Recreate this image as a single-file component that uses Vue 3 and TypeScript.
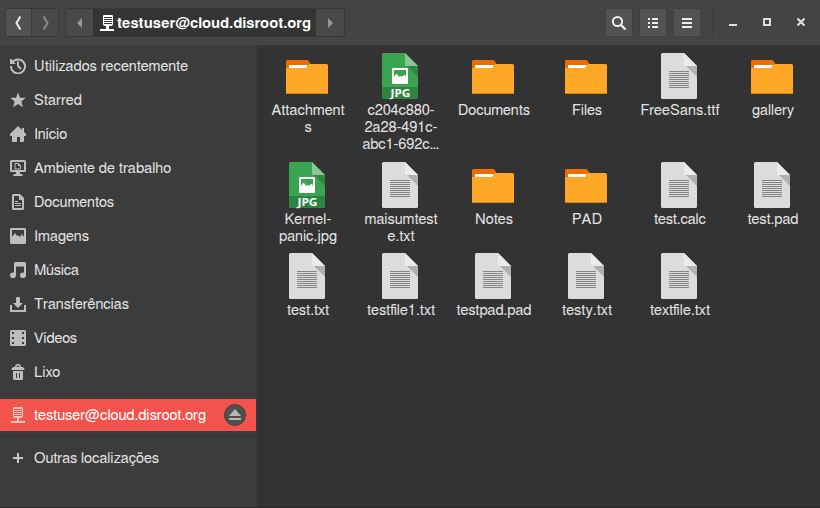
<script setup lang="ts">
type PlaceIcon =
  | 'recent' | 'star' | 'home' | 'desktop' | 'document' | 'image'
  | 'music' | 'download' | 'video' | 'trash'

interface Place { icon: PlaceIcon; label: string; width: number }
interface FileItem { kind: 'folder' | 'jpg' | 'text'; lines: { text: string; width: number }[] }

const places: Place[] = [
  { icon: 'recent', label: 'Utilizados recentemente', width: 154 },
  { icon: 'star', label: 'Starred', width: 48 },
  { icon: 'home', label: 'Início', width: 33 },
  { icon: 'desktop', label: 'Ambiente de trabalho', width: 137 },
  { icon: 'document', label: 'Documentos', width: 80 },
  { icon: 'image', label: 'Imagens', width: 55 },
  { icon: 'music', label: 'Música', width: 45 },
  { icon: 'download', label: 'Transferências', width: 95 },
  { icon: 'video', label: 'Vídeos', width: 43 },
  { icon: 'trash', label: 'Lixo', width: 26 },
]

const file = (kind: FileItem['kind'], ...lines: [string, number][]): FileItem => ({
  kind,
  lines: lines.map(([text, width]) => ({ text, width })),
})

const files: FileItem[] = [
  file('folder', ['Attachment', 73], ['s', 7]),
  file('jpg', ['c204c880-', 67], ['2a28-491c-', 73], ['abc1-692c…', 77]),
  file('folder', ['Documents', 72]),
  file('folder', ['Files', 30]),
  file('text', ['FreeSans.ttf', 79]),
  file('folder', ['gallery', 42]),
  file('jpg', ['Kernel-', 47], ['panic.jpg', 58]),
  file('text', ['maisumtest', 73], ['e.txt', 27]),
  file('folder', ['Notes', 38]),
  file('folder', ['PAD', 30]),
  file('text', ['test.calc', 52]),
  file('text', ['test.pad', 51]),
  file('text', ['test.txt', 42]),
  file('text', ['testfile1.txt', 68]),
  file('text', ['testpad.pad', 75]),
  file('text', ['testy.txt', 50]),
  file('text', ['textfile.txt', 60]),
]
</script>

<template>
  <div class="window">
    <header class="bar">
      <div class="group nav">
        <button class="seg lit" aria-label="Back"><svg width="16" height="16"><path d="M9.300 1.500 5.500 8l3.800 6.500" fill="none" stroke="#eee" stroke-width="2" /></svg></button>
        <button class="seg" aria-label="Forward"><svg width="16" height="16"><path d="M6.700 1.500 10.500 8l-3.800 6.500" fill="none" stroke="#888" stroke-width="2" /></svg></button>
      </div>
      <div class="group path">
        <button class="seg" aria-label="Previous folder"><svg width="16" height="16"><path d="M10 3v10L5 8z" fill="#999" /></svg></button>
        <div class="crumb">
          <svg class="server" width="16" height="16"><path fill="#fff" fill-rule="evenodd" d="M4 0h8q1 0 1 1v8q0 2-2 2H9v3h5v2H0v-2h6v-3H5q-2 0-2-2V1q0-1 1-1zm0 2v1h8V2zm0 2v1h8V4zm0 2v1h8V6zm0 2v1h8V8z" /></svg>
          <svg class="txt bold" width="195" height="20"><text x="0" y="15" textLength="194">testuser@cloud.disroot.org</text></svg>
        </div>
        <button class="seg" aria-label="Next folder"><svg width="16" height="16"><path d="M6 3v10l5-5z" fill="#999" /></svg></button>
      </div>
      <div class="tools">
        <button class="tool" aria-label="Search"><svg width="16" height="16"><circle cx="6.500" cy="6.500" r="4.600" fill="none" stroke="#eee" stroke-width="2" /><path d="m10 10 4.500 4.500" stroke="#eee" stroke-width="2.400" /></svg></button>
        <button class="tool" aria-label="List view"><svg width="16" height="16"><path fill="#eee" d="M3 3h2v2H3zm4 0h6v2H7zM3 7h2v2H3zm4 0h6v2H7zM3 11h2v2H3zm4 0h6v2H7z" /></svg></button>
        <button class="tool" aria-label="Menu"><svg width="16" height="16"><path fill="#eee" d="M3 3h10v2H3zm0 4h10v2H3zm0 4h10v2H3z" /></svg></button>
      </div>
      <div class="controls">
        <svg width="16" height="16"><path d="M4 10h8v2H4z" fill="#ddd" /></svg>
        <svg width="16" height="16"><path d="M5 5h6v6H5z" fill="none" stroke="#ddd" stroke-width="2" /></svg>
        <svg width="16" height="16"><path d="m4.500 4.500 7 7m0-7-7 7" stroke="#ddd" stroke-width="2.200" /></svg>
      </div>
    </header>

    <main class="body">
      <aside class="side">
        <div v-for="p in places" :key="p.label" class="place">
          <svg class="icon" width="16" height="16" fill="#bebebe">
            <g v-if="p.icon === 'recent'" fill="none" stroke="#bebebe"><path d="M2.200 4.500A7 7 0 1 1 1 8" stroke-width="2" /><path d="M8 3.500V8l3 3" stroke-width="2" /><path d="M0 1v5h6L4 4.300 1.500 1z" fill="#bebebe" stroke="none" /></g>
            <path v-else-if="p.icon === 'star'" d="m8 .5 2 5.200h5.800l-4.400 3.700 1.500 5.800L8 12l-4.900 3.200 1.500-5.800L.2 5.700H6z" />
            <path v-else-if="p.icon === 'home'" d="m8 0 4 4V2h2v4l2 2v2h-2v5q0 1-1 1h-3v-5H7v5H3q-1 0-1-1v-5H0V8z" />
            <g v-else-if="p.icon === 'desktop'"><path fill-rule="evenodd" d="M1.500 0h13Q16 0 16 1.500v9q0 1.500-1.500 1.500h-13Q0 12 0 10.500v-9Q0 0 1.500 0zM2 2v8h12V2zM6 12h4v2h2l1 2H3l1-2h2z" /><path d="M5 3.500h3.500l2 2v3.500H5z" fill="none" stroke="#bebebe" /><path d="M8 3v3h3z" /></g>
            <path v-else-if="p.icon === 'document'" fill-rule="evenodd" d="M3.500 0H10l4 4v10.500q0 1.500-1.500 1.500h-9Q2 16 2 14.500v-13Q2 0 3.500 0zM4 2v12h8V6H9V2zm1 5h3v1H5zm0 2h6v1H5zm0 2h6v1H5z" />
            <path v-else-if="p.icon === 'image'" fill-rule="evenodd" d="M1.500 0h13Q16 0 16 1.500v13q0 1.500-1.500 1.500h-13Q0 16 0 14.500v-13Q0 0 1.500 0zM2 2v7l3-4 2 3 1-1 2 2 2-3 2 3V2z" />
            <g v-else-if="p.icon === 'music'"><path d="M5.500 0h9Q16 0 16 1.500V13h-2V4.500H6V13H4V1.500Q4 0 5.500 0z" /><ellipse cx="3" cy="13.200" rx="3" ry="2.800" /><ellipse cx="13" cy="13.200" rx="3" ry="2.800" /></g>
            <path v-else-if="p.icon === 'download'" d="M7 1h2q1 0 1 1v5h3l-5 5-5-5h3V2q0-1 1-1zM0 9h2v5h12V9h2v7H0z" />
            <path v-else-if="p.icon === 'video'" fill-rule="evenodd" d="M1.500 0h13Q16 0 16 1.500v13q0 1.500-1.500 1.500h-13Q0 16 0 14.500v-13Q0 0 1.500 0zM2 2v2h2V2zm10 0v2h2V2zM2 7v2h2V7zm10 0v2h2V7zM2 12v2h2v-2zm10 0v2h2v-2z" />
            <g v-else><path d="M5 3q0-3 3-3t3 3h2l1.500 2v1h-13V5L3 3zm1.500 0h3Q9 1.500 8 1.500T6.500 3z" fill-rule="evenodd" /><path fill-rule="evenodd" d="M3 7h10v7.500q0 1.500-1.500 1.500h-7Q3 16 3 14.500zm3 2v5h1V9zm3 0v5h1V9z" /></g>
          </svg>
          <svg class="txt" :width="p.width + 2" height="20"><text x="0" y="15" :textLength="p.width">{{ p.label }}</text></svg>
        </div>
        <div class="rule"></div>
        <div class="place selected">
          <svg class="icon" width="16" height="16"><path fill="#fbc1be" fill-rule="evenodd" d="M4 0h8q1 0 1 1v8q0 2-2 2H9v3h6v2H1v-2h6v-3H5q-2 0-2-2V1q0-1 1-1zm0 2v1h8V2zm0 2v1h8V4zm0 2v1h8V6zm0 2v1h8V8z" /></svg>
          <svg class="txt" width="174" height="20"><text x="0" y="15" textLength="172">testuser@cloud.disroot.org</text></svg>
          <button class="eject" aria-label="Eject"><svg width="12" height="12"><path d="m6 0 6 7H0zM0 9h12v2H0z" fill="#b8b8b8" /></svg></button>
        </div>
        <div class="rule lower"></div>
        <div class="place other">
          <svg class="icon" width="16" height="16"><path fill="#c8c8c8" d="M7 3h2v4h4v2H9v4H7V9H3V7h4z" /></svg>
          <svg class="txt" width="128" height="20"><text x="0" y="15" textLength="125">Outras localizações</text></svg>
        </div>
      </aside>

      <section class="files">
        <div v-for="(f, i) in files" :key="i" class="file">
          <svg v-if="f.kind === 'folder'" width="48" height="48">
            <path d="M3 11V9.500Q3 8 4.500 8H24q1.500 0 2 1.500L28 13v5H3z" fill="#ef6c00" />
            <path d="M6 13h19l-2 4H6z" fill="#fff" />
            <path d="M3 16h20q1 0 1.500-1l1-2q.5-1 1.500-1h16.500q1.500 0 1.500 1.500V42H3z" fill="#ffa726" />
            <path d="M3 41h42v1H3z" fill="#cc861e" />
          </svg>
          <svg v-else width="48" height="48">
            <path d="M7.500 1H29l13 13v31.500q0 1.500-1.500 1.500h-33Q6 47 6 45.500v-43Q6 1 7.500 1z" :fill="f.kind === 'jpg' ? '#3ba451' : '#dcdcdc'" />
            <path d="M31 14h11v11z" :fill="f.kind === 'jpg' ? '#2f8542' : '#b0b0b0'" />
            <path d="M29 1l13 13H30.500Q29 14 29 12.500z" :fill="f.kind === 'jpg' ? '#88c694' : '#ebebeb'" />
            <g v-if="f.kind === 'jpg'">
              <path d="M6 35h36v10.500q0 1.500-1.500 1.500h-33Q6 47 6 45.500z" fill="#2f8340" />
              <path fill="#fff" fill-rule="evenodd" d="M17 16h14q1 0 1 1v14q0 1-1 1H17q-1 0-1-1V17q0-1 1-1zm1 2v7l2-3h1l2 3 1-1h1l1 1 2-2h1l1 2v-7z" />
              <text class="badge" x="24.500" y="45" text-anchor="middle" textLength="20" lengthAdjust="spacingAndGlyphs">JPG</text>
            </g>
            <path v-else d="M14 19.500h20m-20 2h20m-20 2h20m-20 2h20m-20 2h20m-20 2h20m-20 2h20m-20 2h20m-20 2h20" stroke="#858585" />
          </svg>
          <svg v-for="l in f.lines" :key="l.text" class="txt line" width="84" height="17"><text :x="(86 - l.width) / 2" y="14" :textLength="l.width">{{ l.text }}</text></svg>
        </div>
      </section>
    </main>
  </div>
</template>

<style>
body { margin: 0; background: #333; }
</style>

<style scoped>
* { box-sizing: border-box; }
svg { display: block; flex: none; }
button { border: 0; padding: 0; margin: 0; background: none; display: flex; align-items: center; justify-content: center; }
.window { width: 820px; height: 508px; display: flex; flex-direction: column; background: #333; font-family: FreeSans, "Liberation Sans", sans-serif; border-bottom: 1px solid #2c2828; overflow: hidden; }
.bar { height: 45px; flex: none; display: flex; align-items: flex-start; padding: 8px 11px 0 5px; background: #444; border-radius: 2px 2px 0 0; box-shadow: inset 0 1px #484848; }
.group { display: flex; height: 29px; border: 1px solid #383838; border-radius: 2px; background: #494949; }
.nav { width: 54px; margin-right: 6px; }
.nav .seg { width: 26px; }
.nav .lit { background: #525252; border-right: 1px solid #3c3c3c; }
.path { width: 280px; }
.path .seg { width: 27px; }
.path .seg:last-child { width: 28px; }
.crumb { width: 223px; display: flex; align-items: center; background: #343434; border: 1px solid #303030; border-width: 0 1px; padding-left: 6px; }
.server { margin-right: 1px; }
.txt { fill: #e3e3e3; font-size: 14.670px; overflow: visible; }
.bold { fill: #fff; font-weight: 700; }
.tools { display: flex; gap: 6px; margin-left: auto; padding-right: 11px; border-right: 1px solid #3c3c3c; height: 29px; }
.tool { width: 28px; height: 29px; border: 1px solid #404040; border-radius: 2px; background: #525252; }
.controls { display: flex; gap: 18px; padding: 6px 0 0 12px; }
.body { flex: 1; display: flex; min-height: 0; }
.side { width: 257px; flex: none; background: #3c3c3c; border-right: 1px solid #393939; padding-top: 4px; }
.place { height: 34px; display: flex; align-items: center; padding-left: 10px; }
.icon { margin-right: 8px; }
.rule { height: 1px; background: #353535; margin: 4px 0 5px; }
.place.selected { height: 32px; background: #f2544d; }
.selected .txt { fill: #fff; }
.rule.lower { margin: 5px 0 4px; }
.eject { width: 22px; height: 22px; margin-left: 16px; border-radius: 50%; background: #505050; border: 1px solid #484040; }
.files { flex: 1; display: grid; grid-template-columns: repeat(6, 93px); grid-template-rows: 109px 91px 91px; padding: 7px 0 0 3.500px; align-content: start; box-shadow: inset 0 1px #373737; }
.file { display: flex; flex-direction: column; align-items: center; }
.file .line:nth-child(2) { margin-top: 1px; }
.badge { font: 700 11px "Noto Sans", sans-serif; fill: #fff; }
</style>
